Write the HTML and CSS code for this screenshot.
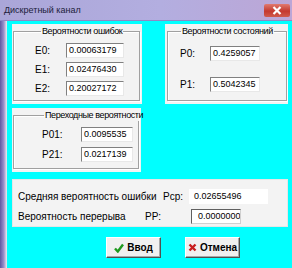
FILE: index.html
```html
<!DOCTYPE html>
<html lang="ru">
<head>
<meta charset="utf-8">
<title>Дискретный канал</title>
<link rel="stylesheet" href="styles.css">
</head>
<body>
<div class="window">
  <div class="titlebar">
    <span class="title">Дискретный канал</span>
    <span class="close">
      <svg width="10" height="9" viewBox="0 0 10 9"><path d="M1.5 1 L8.5 8 M8.5 1 L1.5 8" stroke="#fff" stroke-width="2.2" fill="none"/></svg>
    </span>
  </div>
  <div class="frame">
    <div class="edge"></div>
    <div class="client">
      <div class="top">
        <div class="col-left">
          <div class="panel p-err">
            <fieldset>
              <legend>Вероятности ошибок</legend>
              <div class="row"><span class="lbl">E0:</span><span class="field">0.00063179</span></div>
              <div class="row"><span class="lbl">E1:</span><span class="field">0.02476430</span></div>
              <div class="row"><span class="lbl">E2:</span><span class="field">0.20027172</span></div>
            </fieldset>
          </div>
          <div class="panel p-trans">
            <fieldset>
              <legend>Переходные вероятности</legend>
              <div class="row"><span class="lbl">P01:</span><span class="field">0.0095535</span></div>
              <div class="row"><span class="lbl">P21:</span><span class="field">0.0217139</span></div>
            </fieldset>
          </div>
        </div>
        <div class="panel p-state">
          <fieldset>
            <legend>Вероятности состояний</legend>
            <div class="row"><span class="lbl">P0:</span><span class="field">0.4259057</span></div>
            <div class="row"><span class="lbl">P1:</span><span class="field">0.5042345</span></div>
          </fieldset>
        </div>
      </div>
      <div class="panel p-avg">
        <div class="row r-avg"><span class="lbl">Средняя вероятность ошибки</span><span class="key">Pcp:</span><span class="field flat">0.02655496</span></div>
        <div class="row r-break"><span class="lbl">Вероятность перерыва</span><span class="key">PP:</span><span class="field">0.0000000</span></div>
      </div>
      <div class="buttons">
        <button class="btn">
          <svg width="10" height="10" viewBox="0 0 10 10"><path d="M1 5.5 L3.8 8.5 L9 1.5" stroke="#1f9a1f" stroke-width="2.4" fill="none"/></svg>
          Ввод
        </button>
        <button class="btn">
          <svg width="9" height="9" viewBox="0 0 9 9"><path d="M1.5 1.5 L7.5 7.5 M7.5 1.5 L1.5 7.5" stroke="#c81e1e" stroke-width="2.4" fill="none"/></svg>
          Отмена
        </button>
      </div>
    </div>
  </div>
</div>
</body>
</html>
```

FILE: styles.css
```css
html, body {
  margin: 0;
  padding: 0;
}

body {
  width: 292px;
  height: 268px;
  overflow: hidden;
  font-family: "Liberation Sans", Arial, sans-serif;
  font-size: 10px;
  color: #000000;
}

.window {
  display: flex;
  flex-direction: column;
  height: 268px;
}

.titlebar {
  height: 20px;
  display: flex;
  align-items: center;
  background: linear-gradient(to right, #aaa6d8, #b3aee0 55%, #bca6d6);
  border-bottom: 1px solid #8e88c4;
}

.title {
  padding-left: 4px;
  font-size: 9px;
  color: #20203a;
}

.close {
  margin-left: auto;
  margin-right: 2px;
  width: 26px;
  height: 13px;
  display: flex;
  align-items: center;
  justify-content: center;
  border-radius: 2px;
  background: linear-gradient(to bottom, #e07a70, #c4392f 55%, #d05a4c);
}

.frame {
  flex: 1;
  display: flex;
}

.edge {
  width: 7px;
  background: linear-gradient(to right, #5e58a0, #9892cc 55%, #c8c6e2 80%, #eeeef4);
}

.client {
  flex: 1;
  background-color: #00ffff;
  padding: 3px 0 0 5px;
}

.top {
  display: flex;
  gap: 23px;
}

.col-left {
  width: 130px;
  display: flex;
  flex-direction: column;
  gap: 4px;
}

.panel {
  box-sizing: border-box;
  background-color: #f3f3f3;
  display: flex;
  padding: 1px 2px 3px 1px;
}

.p-err {
  height: 80px;
}

.p-trans {
  height: 64px;
  width: 129px;
}

.p-state {
  width: 123px;
  height: 80px;
  padding: 1px 1px 3px 2px;
}

fieldset {
  flex: 1;
  margin: 0;
  padding: 0;
  min-width: 0;
  border: 1px solid #a0a0a0;
  box-shadow: inset 1px 1px 0 #ffffff, 1px 1px 0 #ffffff;
}

legend {
  font-size: 9px;
  letter-spacing: -0.4px;
  line-height: 12px;
  padding: 0 1px;
  white-space: nowrap;
  width: max-content;
}

.row {
  display: flex;
  align-items: center;
  height: 15px;
}

.lbl {
  flex: none;
  white-space: nowrap;
}

.key {
  flex: none;
}

.field {
  flex: none;
  box-sizing: border-box;
  height: 15px;
  line-height: 13px;
  font-size: 9px;
  background-color: #ffffff;
  border: 1px solid;
  border-color: #808080 #e8e8e8 #e8e8e8 #808080;
  padding-left: 2px;
  white-space: nowrap;
  overflow: hidden;
}

.p-err legend {
  margin-left: 6px;
}

.p-err fieldset {
  padding: 6px 0 0 21px;
}

.p-err .row + .row {
  margin-top: 4px;
}

.p-err .lbl {
  width: 31px;
}

.p-err .field {
  width: 58px;
}

.p-trans legend {
  margin-left: 2px;
}

.p-trans fieldset {
  padding: 6px 0 0 28px;
}

.p-trans .row + .row {
  margin-top: 5px;
}

.p-trans .lbl {
  width: 39px;
}

.p-trans .field {
  width: 52px;
}

.p-state legend {
  margin-left: 1px;
}

.p-state fieldset {
  padding: 9px 0 0 12px;
}

.p-state .row + .row {
  margin-top: 16px;
}

.p-state .lbl {
  width: 30px;
}

.p-state .field {
  width: 50px;
}

.p-avg {
  margin-top: 7px;
  width: 276px;
  height: 48px;
  flex-direction: column;
  padding: 9px 0 0 5px;
  border: 1px solid #e6e6e6;
}

.p-avg .row + .row {
  margin-top: 5px;
}

.r-avg .lbl {
  width: 145px;
}

.r-avg .key {
  width: 26px;
}

.r-avg .field {
  width: 79px;
  border-color: #ffffff;
  padding-left: 4px;
}

.r-break .lbl {
  width: 127px;
}

.r-break .key {
  width: 46px;
}

.r-break .field {
  width: 50px;
  padding-left: 6px;
  border-color: #606060 #d0d0d0 #d0d0d0 #606060;
}

.buttons {
  display: flex;
  gap: 24px;
  margin-top: 10px;
  padding-left: 94px;
}

.btn {
  width: 55px;
  height: 21px;
  display: flex;
  align-items: center;
  justify-content: center;
  gap: 3px;
  padding: 0;
  font-family: "Liberation Sans", Arial, sans-serif;
  font-size: 10px;
  font-weight: bold;
  color: #000000;
  background-color: #f0f0f0;
  border: 1px solid;
  border-color: #ffffff #505050 #505050 #ffffff;
  box-shadow: inset -1px -1px 0 #a8a8a8;
}
```
